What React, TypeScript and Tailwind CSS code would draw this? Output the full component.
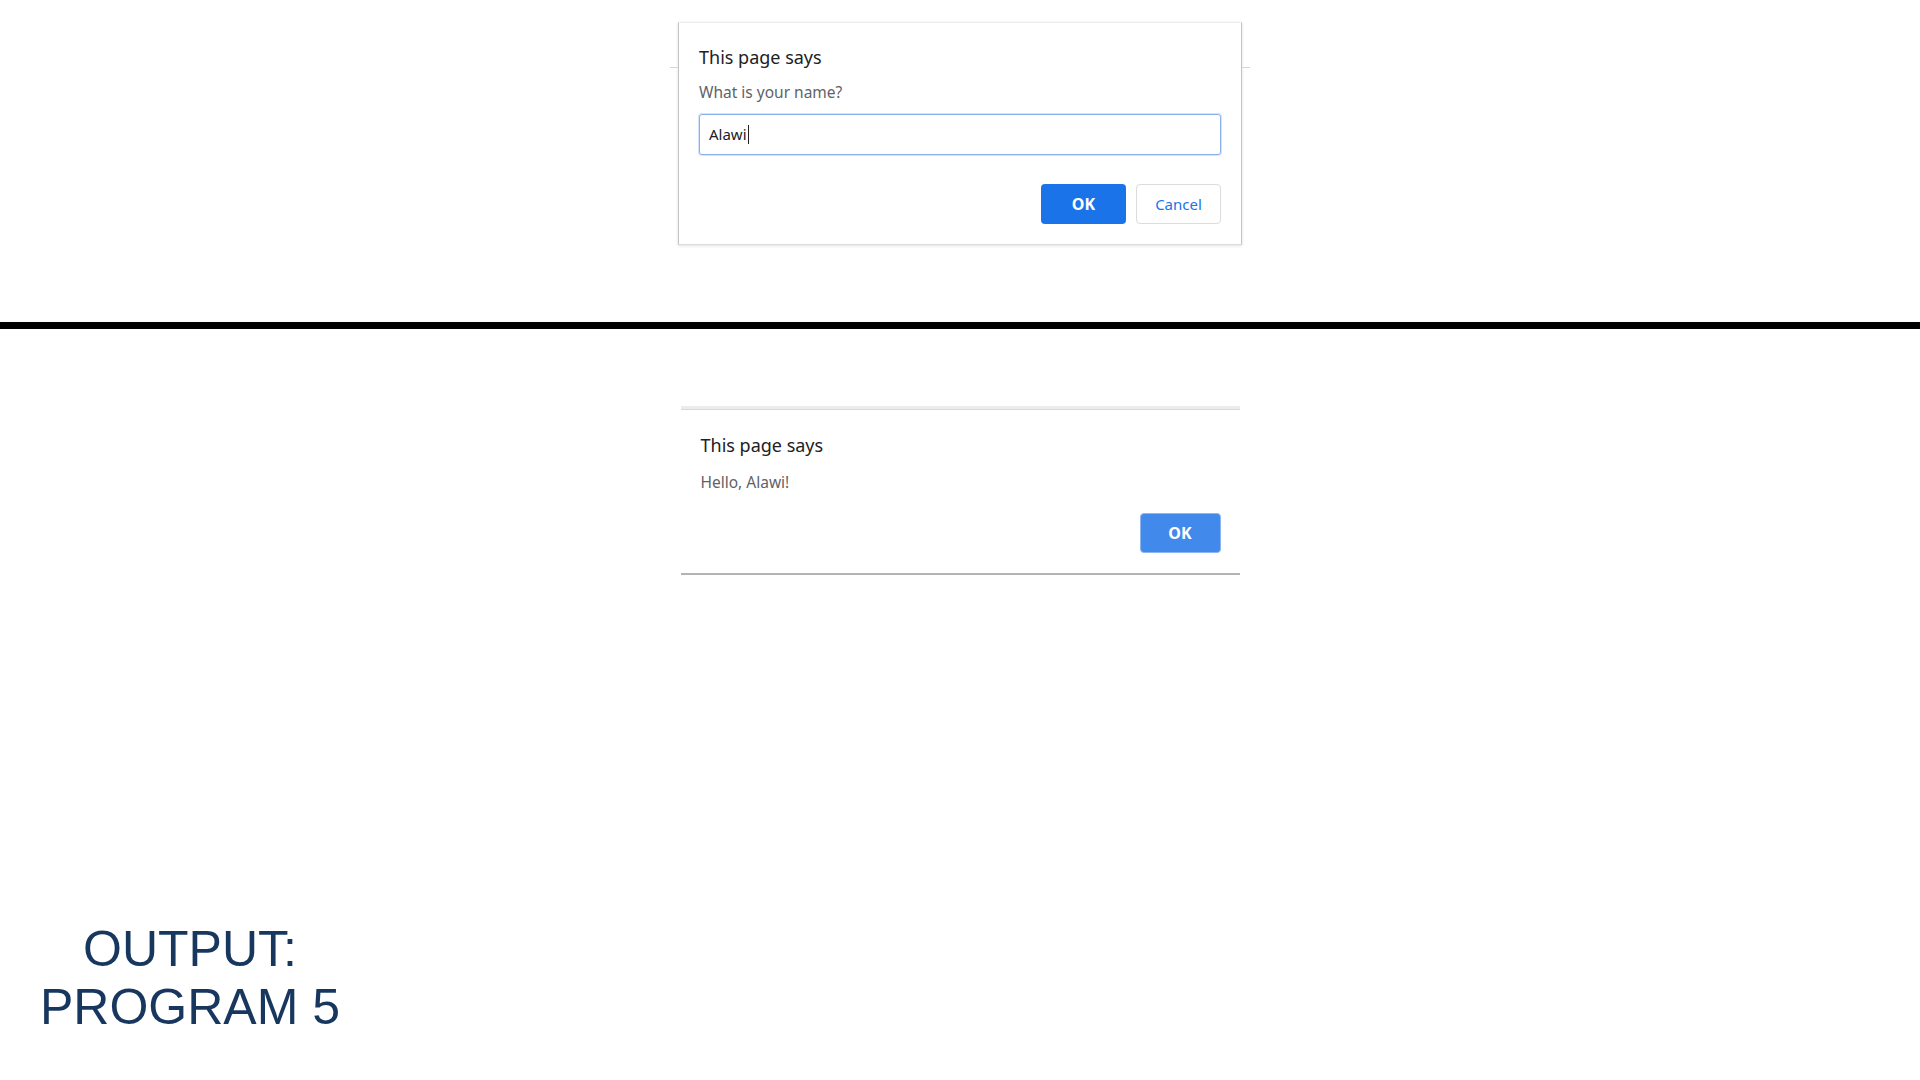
function PromptDialog() {
  return (
    <div className="relative w-[564px] h-[223px] bg-white border-x border-x-[#c4c4c4] border-t border-t-[#ececec] border-b border-b-[#dcdcdc] shadow-[0_1px_3px_rgba(0,0,0,0.12)] px-[20px] pt-[19px] flex flex-col">
      <span className="absolute -left-[9px] top-[44px] w-[8px] h-px bg-[#d6d6d6]" />
      <span className="absolute -right-[9px] top-[44px] w-[8px] h-px bg-[#d6d6d6]" />
      <p className="text-[18px] leading-[30px] text-[#202124]">This page says</p>
      <p className="mt-[10px] text-[15.5px] leading-[20px] text-[#5f6368]">What is your name?</p>
      <div className="mt-[12px] h-[41px] rounded-[3px] border border-[#8ab0ee] ring-1 ring-[#d2e3fc] flex items-center px-[9px]">
        <span className="text-[15px] text-[#202124]">Alawi</span>
        <span className="w-px h-[19px] bg-[#202124] ml-px" />
      </div>
      <div className="mt-[29px] flex justify-end gap-[10px]">
        <button className="w-[85px] h-[40px] rounded-[4px] bg-[#1a73e8] text-white text-[16px] font-bold">OK</button>
        <button className="w-[85px] h-[40px] rounded-[4px] border border-[#dadce0] bg-white text-[#1a73e8] text-[15px]">Cancel</button>
      </div>
    </div>
  );
}

function AlertDialog() {
  return (
    <div className="w-[559px] h-[169px] bg-white flex flex-col">
      <div className="h-[4px] bg-[#ececec] border-b border-b-[#d8d8d8]" />
      <div className="flex-1 pl-[20px] pr-[19px] pt-[20px] flex flex-col">
        <p className="text-[18px] leading-[30px] text-[#202124]">This page says</p>
        <p className="mt-[12px] text-[15.5px] leading-[20px] text-[#5f6368]">Hello, Alawi!</p>
        <div className="mt-[21px] flex justify-end">
          <button className="w-[81px] h-[40px] rounded-[4px] bg-[#4189ea] border border-[#8db5f2] text-white text-[16px] font-bold">OK</button>
        </div>
      </div>
      <div className="h-[2px] bg-[#b3b3b3]" />
    </div>
  );
}

export default function App() {
  return (
    <div className="w-[1920px] h-[1080px] bg-white flex flex-col overflow-hidden font-['Noto_Sans',sans-serif]">
      <div className="pt-[22px] flex justify-center">
        <PromptDialog />
      </div>
      <div className="mt-[77px] h-[7px] bg-black" />
      <div className="mt-[77px] flex justify-center">
        <AlertDialog />
      </div>
      <div className="mt-[345px] w-[380px] text-center font-['Liberation_Sans',Arial,sans-serif] text-[50px] leading-[58px] text-[#17375e]">
        <p>OUTPUT:</p>
        <p>PROGRAM 5</p>
      </div>
    </div>
  );
}
